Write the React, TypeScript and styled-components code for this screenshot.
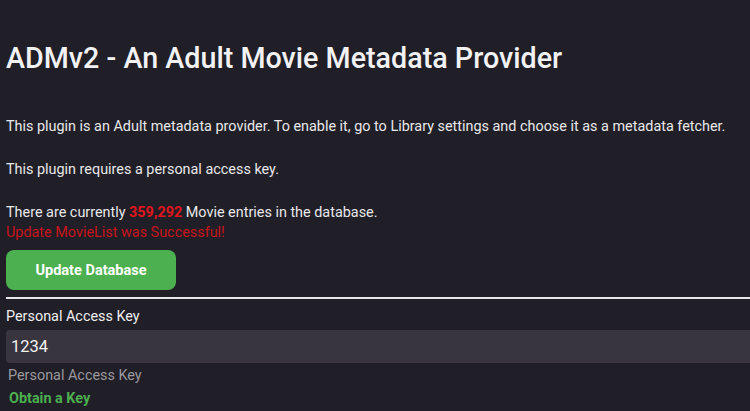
import React from "react";
import styled, { createGlobalStyle } from "styled-components";

const Global = createGlobalStyle`
  html, body { margin: 0; padding: 0; background: #201e26; }
  body { font-family: Roboto, "Noto Sans", sans-serif; color: #e8e8ea; overflow: hidden; }
`;

const Page = styled.div`
  width: 750px;
  height: 411px;
  padding: 0 0 0 6px;
  box-sizing: border-box;
  overflow: hidden;
  background: #201e26;
`;

const Title = styled.h1`
  margin: 0;
  padding-top: 42px;
  font-size: 28.7px;
  font-weight: 500;
  line-height: 32px;
  color: #f2f2f4;
  white-space: nowrap;
`;

const Para = styled.p<{ $top: number }>`
  margin: ${(p) => p.$top}px 0 0;
  font-size: 14.4px;
  line-height: 20px;
  color: #e8e8ea;
  white-space: nowrap;
`;

const Count = styled.span`
  color: #e0161e;
  font-weight: 700;
`;

const Success = styled.div`
  font-size: 14.4px;
  line-height: 20px;
  color: #c9141c;
`;

const Button = styled.button`
  margin-top: 7px;
  width: 170px;
  height: 40px;
  border: none;
  border-radius: 8px;
  background: #4caf50;
  color: #ffffff;
  font-family: Roboto, "Noto Sans", sans-serif;
  font-size: 14.5px;
  font-weight: 700;
  cursor: pointer;
  display: block;
`;

const Divider = styled.hr`
  margin: 7px 0 0;
  border: none;
  height: 2px;
  background: #e6e6e8;
`;

const Field = styled.div`
  margin-top: 9px;
  display: flex;
  flex-direction: column;
`;

const Label = styled.label`
  font-size: 14.4px;
  line-height: 18px;
  color: #eeeef0;
`;

const Input = styled.input`
  margin-top: 4px;
  height: 33px;
  box-sizing: border-box;
  border: none;
  border-radius: 4px 0 0 4px;
  background: #38353f;
  color: #f2f2f4;
  font-family: Roboto, "Noto Sans", sans-serif;
  font-size: 16.5px;
  padding: 0 5px;
  outline: none;
  width: calc(100% + 4px);
`;

const Help = styled.div`
  margin-top: 4px;
  padding-left: 2px;
  font-size: 14.4px;
  line-height: 18px;
  color: #9a999e;
`;

const Link = styled.a`
  display: block;
  margin-top: 5px;
  padding-left: 3px;
  font-size: 14.4px;
  line-height: 18px;
  font-weight: 700;
  color: #4caf50;
  text-decoration: none;
`;

export default function App() {
  return (
    <>
      <Global />
      <Page>
        <Title>ADMv2 - An Adult Movie Metadata Provider</Title>
        <Para $top={43}>
          This plugin is an Adult metadata provider. To enable it, go to Library settings and choose it as a metadata fetcher.
        </Para>
        <Para $top={23}>This plugin requires a personal access key.</Para>
        <Para $top={23}>
          There are currently <Count>359,292</Count> Movie entries in the database.
        </Para>
        <Success>Update MovieList was Successful!</Success>
        <Button>Update Database</Button>
        <Divider />
        <Field>
          <Label>Personal Access Key</Label>
          <Input defaultValue="1234" />
          <Help>Personal Access Key</Help>
          <Link href="#">Obtain a Key</Link>
        </Field>
      </Page>
    </>
  );
}
